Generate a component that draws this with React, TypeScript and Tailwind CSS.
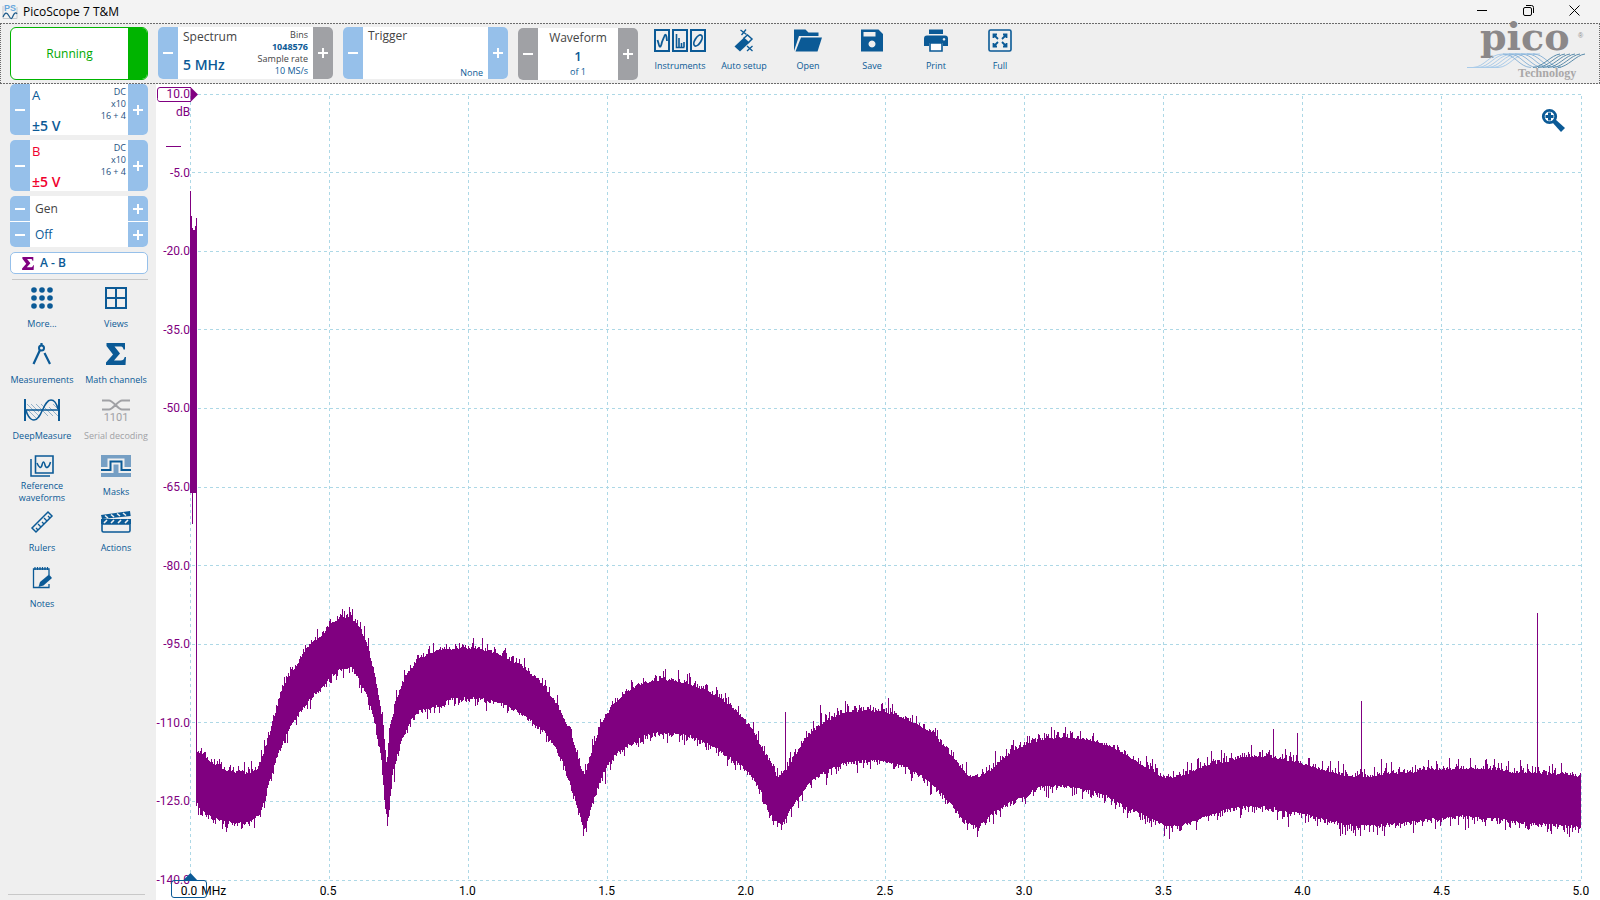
import type { ReactNode } from "react";

const NAVY = "#0b5a96";
const PURPLE = "#800080";

/* ---------- spectrum data ---------- */

const UPPER: number[][] = [
  [197, 753], [200, 755], [205, 759], [213, 765], [224, 771], [235, 773], [248, 774], [257, 770], [262, 758], [270, 732],
  [277, 707], [281, 692], [286, 681], [295, 668], [303, 655], [311, 643], [320, 638], [330, 626], [340, 618], [350, 618],
  [354, 622], [360, 631], [366, 642], [372, 667], [378, 697], [383, 727], [386, 766], [389, 738], [392, 718], [397, 698],
  [402, 684], [410, 670], [420, 659], [430, 654], [445, 651], [460, 649], [475, 649], [490, 652], [505, 659], [520, 667],
  [535, 678], [548, 693], [560, 712], [570, 733], [577, 757], [584, 778], [589, 760], [595, 742], [600, 725], [607, 714],
  [613, 706], [625, 693], [640, 685], [655, 682], [673, 681], [690, 685], [705, 691], [720, 699], [735, 711], [750, 729],
  [760, 747], [770, 763], [777, 778], [786, 770], [795, 756], [803, 742], [812, 732], [825, 722], [845, 713], [865, 711],
  [885, 713], [905, 719], [920, 727], [935, 737], [945, 749], [957, 763], [968, 777], [978, 778], [990, 771], [1000, 762],
  [1015, 750], [1030, 744], [1045, 740], [1060, 738], [1080, 739], [1097, 743], [1110, 747], [1120, 752], [1130, 758],
  [1140, 765], [1150, 770], [1160, 777], [1170, 779], [1180, 777], [1195, 771], [1210, 765], [1225, 763], [1240, 758],
  [1255, 757], [1270, 758], [1285, 761], [1300, 764], [1320, 770], [1335, 774], [1350, 777], [1370, 777], [1390, 775],
  [1410, 773], [1430, 770], [1445, 770], [1470, 769], [1490, 770], [1510, 773], [1530, 773], [1545, 775], [1560, 775], [1581, 777],
];

const LOWER: number[][] = [
  [197, 803], [200, 809], [205, 813], [215, 817], [225, 821], [235, 821], [245, 823], [255, 817], [260, 813], [265, 795],
  [270, 777], [277, 755], [285, 735], [290, 725], [300, 711], [310, 697], [320, 688], [330, 676], [340, 668], [352, 667],
  [360, 681], [368, 698], [376, 728], [381, 758], [384, 798], [387, 822], [390, 795], [392, 774], [394, 762], [400, 742],
  [410, 719], [420, 709], [440, 704], [450, 698], [470, 697], [490, 699], [510, 706], [530, 719], [545, 732], [555, 747],
  [565, 767], [575, 798], [582, 824], [585, 827], [590, 808], [595, 793], [600, 780], [605, 767], [613, 755], [625, 746],
  [640, 737], [655, 731], [670, 733], [685, 733], [700, 739], [720, 750], [735, 760], [750, 773], [760, 790], [770, 814],
  [777, 822], [783, 822], [790, 808], [800, 795], [810, 781], [825, 770], [845, 762], [875, 759], [890, 762], [905, 765],
  [920, 774], [935, 787], [948, 800], [960, 815], [970, 824], [977, 826], [985, 819], [995, 810], [1010, 801], [1025, 793],
  [1040, 786], [1060, 785], [1080, 788], [1097, 791], [1110, 796], [1125, 806], [1140, 812], [1155, 820], [1167, 825],
  [1180, 825], [1195, 820], [1210, 814], [1225, 809], [1240, 806], [1260, 806], [1275, 807], [1290, 811], [1305, 813],
  [1320, 818], [1345, 823], [1370, 825], [1390, 823], [1410, 821], [1435, 818], [1460, 815], [1480, 817], [1500, 818],
  [1520, 822], [1540, 823], [1581, 826],
];

const SPURS: Record<number, number> = {
  342: 609, 344: 611, 352: 609, 678: 670, 785: 712, 820: 705, 888: 698, 995: 751, 1065: 727, 1211: 751, 1221: 750,
  1273: 729, 1297: 733, 1338: 761, 1361: 701, 1381: 759, 1391: 762, 1470: 758, 1520: 760, 1537: 613,
};

const DIPS: Record<number, number> = {
  222: 829, 387: 826, 394: 782, 583: 836, 605: 784, 781: 830, 826: 785, 977: 837, 1169: 839, 1288: 827, 1340: 836, 1355: 836, 1465: 830, 1569: 837,
};

function level(points: number[][], x: number) {
  let i = 1;
  while (i < points.length - 1 && points[i][0] < x) i++;
  const [x0, y0] = points[i - 1];
  const [x1, y1] = points[i];
  return y0 + ((y1 - y0) * (x - x0)) / (x1 - x0);
}

function buildTrace() {
  let seed = 90217;
  const random = () => {
    seed = (seed * 16807) % 2147483647;
    return seed / 2147483647;
  };
  const burst = () => Math.min(12, -Math.log(random() + 0.001) * 3);
  let d = "M190.5 191V493M191.5 216V493M192.5 228V524M193.5 230V493M194.5 230V493M195.5 226V493M196.5 218V806";
  for (let x = 197; x < 1581; x++) {
    const top = SPURS[x] ?? Math.round(level(UPPER, x) - burst());
    const bottom = DIPS[x] ?? Math.round(level(LOWER, x) + burst());
    d += `M${x}.5 ${top}V${bottom}`;
  }
  return d;
}

const TRACE = buildTrace();
const GRID_X = [190, 329, 468, 607, 746, 885, 1024, 1163, 1302, 1441, 1581];
const GRID_Y = [94, 172, 251, 329, 408, 487, 565, 644, 722, 801, 880];
const DB_LABELS = ["10.0", "-5.0", "-20.0", "-35.0", "-50.0", "-65.0", "-80.0", "-95.0", "-110.0", "-125.0", "-140.0"];
const MHZ_LABELS = ["0.0", "0.5", "1.0", "1.5", "2.0", "2.5", "3.0", "3.5", "4.0", "4.5", "5.0"];

/* ---------- icons ---------- */

function Icon({ w, h, children }: { w: number; h: number; children: ReactNode }) {
  return (
    <svg width={w} height={h} viewBox={`0 0 ${w} ${h}`} fill="none" stroke="currentColor" strokeWidth="2" className="overflow-visible" aria-hidden="true">
      {children}
    </svg>
  );
}

const InstrumentsIcon = () => (
  <Icon w={52} h={23}>
    <path d="M1 1h14v21H1zM19 1h14v21H19zM37 1h14v21H37z" />
    <path d="M3.500 11l1.500 5c1 3 2 2 3-3l2-5c1-3 2-3 2.500 0l.5 4" strokeWidth="1.800" />
    <path d="M22.500 5v13.500h8M25 18V9M27.500 18v-4M30 18v-5" strokeWidth="1.600" />
    <ellipse cx="44" cy="11.500" rx="3" ry="6.200" transform="rotate(32 44 11.500)" strokeWidth="1.800" />
  </Icon>
);
const WandIcon = () => (
  <Icon w={22} h={24}>
    <path d="M1.500 17.500L11 8.500l5.500 5L7 22.500z" fill="currentColor" stroke="none" />
    <path d="M10.500 9.500l4-3.500 4.500 4-4 4" strokeWidth="1.500" />
    <path d="M7.500 1l6 4.500M13 0.500L8.500 6M14 17l5.500 5M19.500 17L14 22" strokeWidth="1.300" />
  </Icon>
);
const OpenIcon = () => (
  <Icon w={28} h={23}>
    <path d="M0 22V0.500h11.500l3 3h10v3.500H5z" fill="currentColor" stroke="none" />
    <path d="M7 8.500h21L23.500 22.500H1.500z" fill="currentColor" stroke="none" />
  </Icon>
);
const SaveIcon = () => (
  <Icon w={22} h={23}>
    <path fillRule="evenodd" d="M0 0.500h17.500L22 5v17.500H0zM2.500 3v4.500h12V3zM11 11.500a3.500 3.500 0 1 0 .01 0z" fill="currentColor" stroke="none" />
  </Icon>
);
const PrintIcon = () => (
  <Icon w={24} h={23}>
    <path d="M5 .5h14v4.500H5z" fill="currentColor" stroke="none" />
    <path fillRule="evenodd" d="M3 6.500h18a3 3 0 0 1 3 3V17h-5v-3H5v3H0V9.500a3 3 0 0 1 3-3zM20 9a1.300 1.300 0 1 0 .01 0z" fill="currentColor" stroke="none" />
    <path d="M6 14h12v8H6z" fill="#fff" strokeWidth="1.600" />
  </Icon>
);
const FullIcon = () => (
  <Icon w={24} h={23}>
    <rect x="1" y="1" width="22" height="21" rx="1.500" strokeWidth="1.600" />
    <path d="M5.500 9V5.500H9M5.500 5.500L10 10M15 5.500h3.500V9M18.500 5.500L14 10M5.500 14v3.500H9M5.500 17.500L10 13M15 17.500h3.500V14M18.500 17.500L14 13" strokeWidth="1.800" />
  </Icon>
);
const MoreIcon = () => (
  <Icon w={22} h={22}>
    {[3, 11, 19].map((y) => [3, 11, 19].map((x) => <circle key={`${x}-${y}`} cx={x} cy={y} r="2.800" fill="currentColor" stroke="none" />))}
  </Icon>
);
const ViewsIcon = () => (
  <Icon w={22} h={22}>
    <path d="M1 1h20v20H1zM11 1v20M1 11h20" />
  </Icon>
);
const CompassIcon = () => (
  <Icon w={20} h={22}>
    <circle cx="9.500" cy="5" r="2.500" />
    <path d="M8 7L1.500 21M12.500 10L18 21M9.500 0v3" strokeWidth="2.200" />
  </Icon>
);
const SigmaIcon = ({ w, h }: { w: number; h: number }) => (
  <svg width={w} height={h} viewBox="0 0 20 22" fill="currentColor" aria-hidden="true">
    <path d="M.5 0H19v6.500H17.500c-.4-2.500-1.500-3-3.500-3H8.500l5.500 7L8 17.500h6.500c2.500 0 3.600-1 4.200-3.500H20l-.5 8H0v-2.500L7 11.500.5 3z" />
  </svg>
);
const DeepMeasureIcon = () => (
  <Icon w={36} h={22}>
    <path d="M1 0v22M35 0v22" />
    <path d="M2 11h32" strokeWidth="1.500" />
    <path d="M3 5l12 12M7 5l8 8M12 5l6 6M17 5l5 5M3 10l9 9M3 15l3 3M18 11l6 6M22 10l7 7M25 8l9 9M29 5l5 5" strokeWidth=".7" opacity=".6" />
    <path d="M2 11c1 5 4 10 8 10 8 0 9-20 17-20 4 0 6 5 7 9" strokeWidth="1.500" />
  </Icon>
);
const SerialIcon = () => (
  <Icon w={30} h={22}>
    <path d="M1 1.500h7c4 0 9 9 13 9h8M1 10.500h7c4 0 9-9 13-9h8" />
    <text x="15" y="22" textAnchor="middle" className="text-[11px]" fontFamily="Roboto, sans-serif" fill="currentColor" stroke="none">1101</text>
  </Icon>
);
const ReferenceIcon = () => (
  <Icon w={24} h={22}>
    <path d="M5.500 1h17.500v17H5.500z" strokeWidth="1.600" />
    <path d="M1 4v17h19" strokeWidth="1.500" />
    <path d="M7 8c2 5 4 6 5 2s2-4 3 0 4 3 5.500-3" strokeWidth="1.500" />
  </Icon>
);
const MasksIcon = () => (
  <Icon w={30} h={22}>
    <path d="M0 0h30v22H0z" fill="#769fc4" stroke="none" />
    <path d="M0 15h9.500V6.500h11V15H30" stroke="#efefef" strokeWidth="6" />
    <path d="M0 15h9.500V6.500h11V15H30" />
  </Icon>
);
const RulerIcon = () => (
  <Icon w={22} h={22}>
    <path d="M1 17L17 1l4 4L5 21z" strokeWidth="1.500" />
    <path d="M7 19l-2-2M10 16l-3-3M13 13l-2-2M16 10l-3-3M19 7l-2-2" strokeWidth="1.300" />
  </Icon>
);
const ActionsIcon = () => (
  <Icon w={30} h={22}>
    <path d="M1 13h28v6.500a1.500 1.500 0 0 1-1.500 1.500h-25A1.500 1.500 0 0 1 1 19.500z" strokeWidth="1.600" />
    <path d="M0 8h30v5H0zM0 4L29 0l.7 5L1 8z" fill="currentColor" stroke="none" />
    <path d="M4 4.500l3 2.500M10 3.500l3 2.500M16 2.500l3 2.500M22 2l3 2.500M6 9l-3 3M13 9l-3 3M20 9l-3 3M27 9l-3 3" stroke="#efefef" strokeWidth="1.600" />
  </Icon>
);
const NotesIcon = () => (
  <Icon w={20} h={22}>
    <path d="M17 8V2H1.500v18.500H17V17" strokeWidth="1.300" />
    <path d="M3 0v3M5.500 0v3M8 0v3M10.500 0v3M13 0v3M15.500 0v3" strokeWidth="1.200" />
    <path d="M6.500 20l1.500-5L17 7.500l3 3.500-8.500 7.500z" fill="currentColor" stroke="none" />
  </Icon>
);

/* ---------- shared parts ---------- */

function StepButton({ sign, tone, label }: { sign: "+" | "-"; tone: "blue" | "grey"; label: string }) {
  return (
    <button
      type="button"
      aria-label={label}
      className={`flex w-5 shrink-0 items-center justify-center text-white ${tone === "blue" ? "bg-[#96c0ea]" : "bg-[#a0a1a5]"}`}
    >
      <svg width="10" height="10" viewBox="0 0 10 10" stroke="currentColor" strokeWidth="2" shapeRendering="crispEdges" aria-hidden="true">
        <path d={sign === "+" ? "M0 5h10M5 0v10" : "M0 5h10"} />
      </svg>
    </button>
  );
}

function Stepper({ name, left, right, className, children }: { name: string; left: "blue" | "grey"; right: "blue" | "grey"; className: string; children: ReactNode }) {
  return (
    <section aria-label={name} className={`flex shrink-0 overflow-hidden rounded-[5px] bg-white ${className}`}>
      <StepButton sign="-" tone={left} label={`${name} down`} />
      <div className="flex min-w-0 flex-1 justify-between">{children}</div>
      <StepButton sign="+" tone={right} label={`${name} up`} />
    </section>
  );
}

function Channel({ name, color }: { name: string; color: string }) {
  return (
    <Stepper name={`Channel ${name}`} left="blue" right="blue" className="h-[51px]">
      <div className={`flex flex-col justify-between pl-0.5 ${color}`}>
        <span className="text-[13px] leading-[22px]">{name}</span>
        <span className="text-sm leading-[18px] font-semibold">±5 V</span>
      </div>
      <div className="flex flex-col pt-0.5 pr-0.5 text-right text-[9px] leading-3 text-[#1d4f80]">
        <span>DC</span>
        <span>x10</span>
        <span>16 + 4</span>
      </div>
    </Stepper>
  );
}

function ToolButton({ label, children }: { label: string; children: ReactNode }) {
  return (
    <button type="button" className="flex w-16 shrink-0 flex-col items-center pt-[5px] text-[9px] leading-3 text-[#0b5a96]">
      <span className="flex h-[31px] items-start">{children}</span>
      <span className="whitespace-nowrap">{label}</span>
    </button>
  );
}

function SideButton({ label, muted, children }: { label: string; muted?: boolean; children: ReactNode }) {
  return (
    <button type="button" disabled={muted} className={`flex h-14 flex-col items-center text-[9px] leading-3 ${muted ? "text-[#a0a1a5]" : "text-[#0b5a96]"}`}>
      <span className="flex h-[25px] items-start">{children}</span>
      <span className="flex h-6 max-w-[74px] items-center">{label}</span>
    </button>
  );
}

function Dashes() {
  return <div className="h-px shrink-0 bg-[repeating-linear-gradient(90deg,#6b6b6b_0_2px,transparent_2px_3px)]" />;
}

function Logo() {
  const strands = [0, 1, 2, 3, 4, 5];
  return (
    <svg width="124" height="56" viewBox="0 0 124 56" role="img" aria-label="pico Technology" className="overflow-visible">
      <text x="17" y="25" className="text-[38px]" fontFamily="'DejaVu Serif', serif" fontWeight="700" fill="#8b8889">pico</text>
      <text x="115" y="13" className="text-[7px]" fontFamily="'Liberation Sans', sans-serif" fill="#8b8889">®</text>
      <g fill="none" strokeWidth="1">
        {strands.map((i) => (
          <path key={`a${i}`} d={`M${4 + i * 5} 42.500h6C${22 + i * 5} 42 ${26 + i * 5} 29 ${40 + i * 5} 29h12`} stroke="#a9cbe9" />
        ))}
        {strands.map((i) => (
          <path key={`b${i}`} d={`M${40 + i * 6} 29C${52 + i * 6} 29 ${56 + i * 6} 42 ${68 + i * 6} 42.500`} stroke="#8fb6d8" />
        ))}
        {strands.map((i) => (
          <path key={`c${i}`} d={`M${70 + i * 5} 42.500C${80 + i * 5} 42 ${88 + i * 5} 30 ${97 + i * 5} 29`} stroke="#5a8cab" />
        ))}
      </g>
      <text x="55" y="52" className="text-xs" fontFamily="'Liberation Serif', serif" fontWeight="700" fill="#a9a7a8">Technology</text>
    </svg>
  );
}

/* ---------- page sections ---------- */

function TitleBar() {
  return (
    <header className="flex h-[23px] shrink-0 items-center bg-[#f3f3f3] text-black">
      <svg width="16" height="18" viewBox="0 0 16 18" className="ml-0.5 overflow-visible" aria-hidden="true">
        <path d="M1 3v12.500h14V4" fill="none" stroke="#c4c9ce" />
        <text x="8" y="8" textAnchor="middle" className="text-[9px]" fontWeight="700" fontFamily="'Liberation Sans', sans-serif" fill="#69a7dc">PS</text>
        <path d="M1 14c2-5 4-5 6-1s3 3 4 0 3-4 4-2" fill="none" stroke="#1d5a8a" strokeWidth="1.200" />
      </svg>
      <h1 className="ml-[5px] flex-1 text-xs">PicoScope 7 T&amp;M</h1>
      <div className="flex h-5 self-start pr-[3px]">
        <button type="button" aria-label="Minimize" className="flex w-[46px] items-center justify-center">
          <svg width="11" height="11" viewBox="0 0 11 11" stroke="#000"><path d="M0 5.500h10" /></svg>
        </button>
        <button type="button" aria-label="Restore" className="flex w-[46px] items-center justify-center">
          <svg width="11" height="11" viewBox="0 0 11 11" fill="none" stroke="#000">
            <rect x=".5" y="2.500" width="8" height="8" rx="1.500" />
            <path d="M3 .5h5.500a2 2 0 0 1 2 2V8" />
          </svg>
        </button>
        <button type="button" aria-label="Close" className="flex w-[46px] items-center justify-center">
          <svg width="11" height="11" viewBox="0 0 11 11" stroke="#000"><path d="M.5.5l10 10M10.500.5l-10 10" /></svg>
        </button>
      </div>
    </header>
  );
}

function Toolbar() {
  return (
    <div className="shrink-0 bg-[#efefef]">
      <Dashes />
      <div className="flex h-[59px] items-start border-x border-dotted border-[#6b6b6b] pt-[3px] pr-3 pl-[9px]">
        <button type="button" className="flex h-[53px] w-[138px] shrink-0 overflow-hidden rounded-md border border-[#00b400] bg-white text-xs text-[#00a800]">
          <span className="flex flex-1 items-center justify-center self-stretch">Running</span>
          <span className="w-[19px] self-stretch bg-[#00b400]" />
        </button>
        <Stepper name="Spectrum" left="blue" right="grey" className="ml-2.5 h-[52px] w-[175px]">
          <div className="flex flex-col justify-between pl-[5px]">
            <span className="text-xs leading-5 text-[#444]">Spectrum</span>
            <span className="pb-1 text-sm leading-5 font-semibold text-[#0b5a96]">5 MHz</span>
          </div>
          <div className="flex flex-col pt-0.5 pr-[5px] text-right text-[9px] leading-3 text-[#444]">
            <span>Bins</span>
            <span className="font-bold text-[#0b5a96]">1048576</span>
            <span>Sample rate</span>
            <span className="text-[#0b5a96]">10 MS/s</span>
          </div>
        </Stepper>
        <Stepper name="Trigger" left="blue" right="blue" className="ml-2.5 h-[52px] w-[165px]">
          <span className="pl-[5px] text-xs leading-[18px] text-[#444]">Trigger</span>
          <span className="self-end pr-[5px] text-[9px] leading-3 text-[#0b5a96]">None</span>
        </Stepper>
        <Stepper name="Waveform" left="grey" right="grey" className="mt-px ml-2.5 h-[52px] w-[120px]">
          <div className="flex flex-1 flex-col items-center">
            <span className="text-xs leading-5 text-[#444]">Waveform</span>
            <span className="text-[13px] leading-4 font-semibold text-[#0b5a96]">1</span>
            <span className="text-[9px] leading-4 text-[#0b5a96]">of 1</span>
          </div>
        </Stepper>
        <nav aria-label="Tools" className="-mt-[3px] ml-[10px] flex">
          <ToolButton label="Instruments"><InstrumentsIcon /></ToolButton>
          <ToolButton label="Auto setup"><WandIcon /></ToolButton>
          <ToolButton label="Open"><OpenIcon /></ToolButton>
          <ToolButton label="Save"><SaveIcon /></ToolButton>
          <ToolButton label="Print"><PrintIcon /></ToolButton>
          <ToolButton label="Full"><FullIcon /></ToolButton>
        </nav>
        <div className="-mt-[2px] ml-auto"><Logo /></div>
      </div>
      <Dashes />
    </div>
  );
}

function Sidebar() {
  return (
    <aside className="flex w-[156px] shrink-0 flex-col bg-[#efefef]">
      <div className="flex flex-col gap-[5px] pr-2 pl-2.5">
        <Channel name="A" color="text-[#0b5a96]" />
        <Channel name="B" color="text-[#f0002d]" />
        <div className="flex flex-col gap-px overflow-hidden rounded-[5px] bg-white">
          {["Gen", "Off"].map((t, i) => (
            <div key={t} className="flex h-[25px]">
              <StepButton sign="-" tone="blue" label={`${t} down`} />
              <span className={`flex flex-1 items-center pt-px pl-[5px] text-xs ${i ? "text-[#0b5a96]" : "text-[#444]"}`}>{t}</span>
              <StepButton sign="+" tone="blue" label={`${t} up`} />
            </div>
          ))}
        </div>
        <button type="button" className="flex h-[22px] items-center gap-1.5 rounded-[5px] border border-[#96c0ea] bg-white pl-[11px] text-xs font-semibold text-[#0b5a96]">
          <span className="text-[#800080]"><SigmaIcon w={12} h={13} /></span>
          A - B
        </button>
        <div className="ml-0.5 h-px bg-[#c8c8c8]" />
      </div>
      <nav aria-label="Features" className="mt-[7px] grid grid-cols-2 pr-[3px] pl-[5px]">
        <SideButton label="More..."><MoreIcon /></SideButton>
        <SideButton label="Views"><ViewsIcon /></SideButton>
        <SideButton label="Measurements"><CompassIcon /></SideButton>
        <SideButton label="Math channels"><SigmaIcon w={20} h={22} /></SideButton>
        <SideButton label="DeepMeasure"><DeepMeasureIcon /></SideButton>
        <SideButton label="Serial decoding" muted><SerialIcon /></SideButton>
        <SideButton label="Reference waveforms"><ReferenceIcon /></SideButton>
        <SideButton label="Masks"><MasksIcon /></SideButton>
        <SideButton label="Rulers"><RulerIcon /></SideButton>
        <SideButton label="Actions"><ActionsIcon /></SideButton>
        <SideButton label="Notes"><NotesIcon /></SideButton>
      </nav>
      <div className="mt-auto mr-[11px] mb-[5px] ml-2 h-px shrink-0 bg-[#c8c8c8]" />
    </aside>
  );
}

function Plot() {
  return (
    <main className="relative grid min-w-0 flex-1 grid-cols-[34px_1fr_19px] grid-rows-[10px_1fr_20px] bg-white font-[Roboto,sans-serif] text-xs">
      <div className="col-start-1 row-start-2 flex flex-col justify-between text-[#800080]">
        {DB_LABELS.map((t) => (
          <span key={t} className="flex h-0 items-center justify-end">{t}</span>
        ))}
      </div>
      <svg viewBox="190 94 1391 786" preserveAspectRatio="none" className="col-start-2 row-start-2 h-full min-h-0 w-full overflow-visible" role="img" aria-label="Spectrum of A - B">
        <g stroke="#add8e6" strokeDasharray="3 3" strokeDashoffset="4" shapeRendering="crispEdges">
          {GRID_X.map((x) => <path key={x} d={`M${x}.5 94V880`} />)}
          {GRID_Y.map((y) => <path key={y} d={`M190 ${y}.5H1581`} />)}
        </g>
        <path d={TRACE} stroke={PURPLE} shapeRendering="crispEdges" />
      </svg>
      <div className="col-start-2 row-start-3 -ml-px flex justify-between pt-0.5 text-black">
        {MHZ_LABELS.map((t, i) => (
          <span key={t} className="flex w-0 items-center justify-center whitespace-nowrap">
            <span className="relative">
              {t}
              {i === 0 && <span className="absolute left-full ml-1">MHz</span>}
            </span>
          </span>
        ))}
      </div>
      <svg width="42" height="64" viewBox="0 0 42 64" fill="none" className="absolute top-0.5 left-0" aria-hidden="true">
        <path d="M35 1.500H4a2.500 2.500 0 0 0-2.500 2.500v8.500A2.500 2.500 0 0 0 4 15.500h31" stroke={PURPLE} />
        <path d="M34.500 1v15L42 8.500z" fill={PURPLE} />
        <path d="M10 60.500h15" stroke={PURPLE} />
      </svg>
      <span className="absolute top-5 left-5 leading-4 text-[#800080]">dB</span>
      <svg width="37" height="27" viewBox="0 0 37 27" fill="none" className="absolute bottom-0.5 left-[15px]" aria-hidden="true">
        <rect x=".5" y="9.500" width="35" height="17" rx="2.500" stroke={NAVY} />
        <path d="M12 9.500l7.500-7.500L26.500 9.500z" fill={NAVY} />
      </svg>
      <button type="button" aria-label="Zoom" className="absolute top-6 right-[34px]">
        <svg width="25" height="25" viewBox="0 0 25 25" aria-hidden="true">
          <path d="M11 14l3-3 10 9-4 4z" fill={NAVY} />
          <circle cx="8.500" cy="8.500" r="6.200" fill="#fff" stroke={NAVY} strokeWidth="2.800" />
          <path d="M8.500 4.500v8M4.500 8.500h8" stroke={NAVY} strokeWidth="3" />
        </svg>
      </button>
    </main>
  );
}

export default function App() {
  return (
    <div className="flex h-screen min-h-[640px] flex-col overflow-hidden bg-[#efefef] font-['Open_Sans','Noto_Sans',sans-serif]">
      <TitleBar />
      <Toolbar />
      <div className="flex min-h-0 flex-1">
        <Sidebar />
        <Plot />
      </div>
    </div>
  );
}
